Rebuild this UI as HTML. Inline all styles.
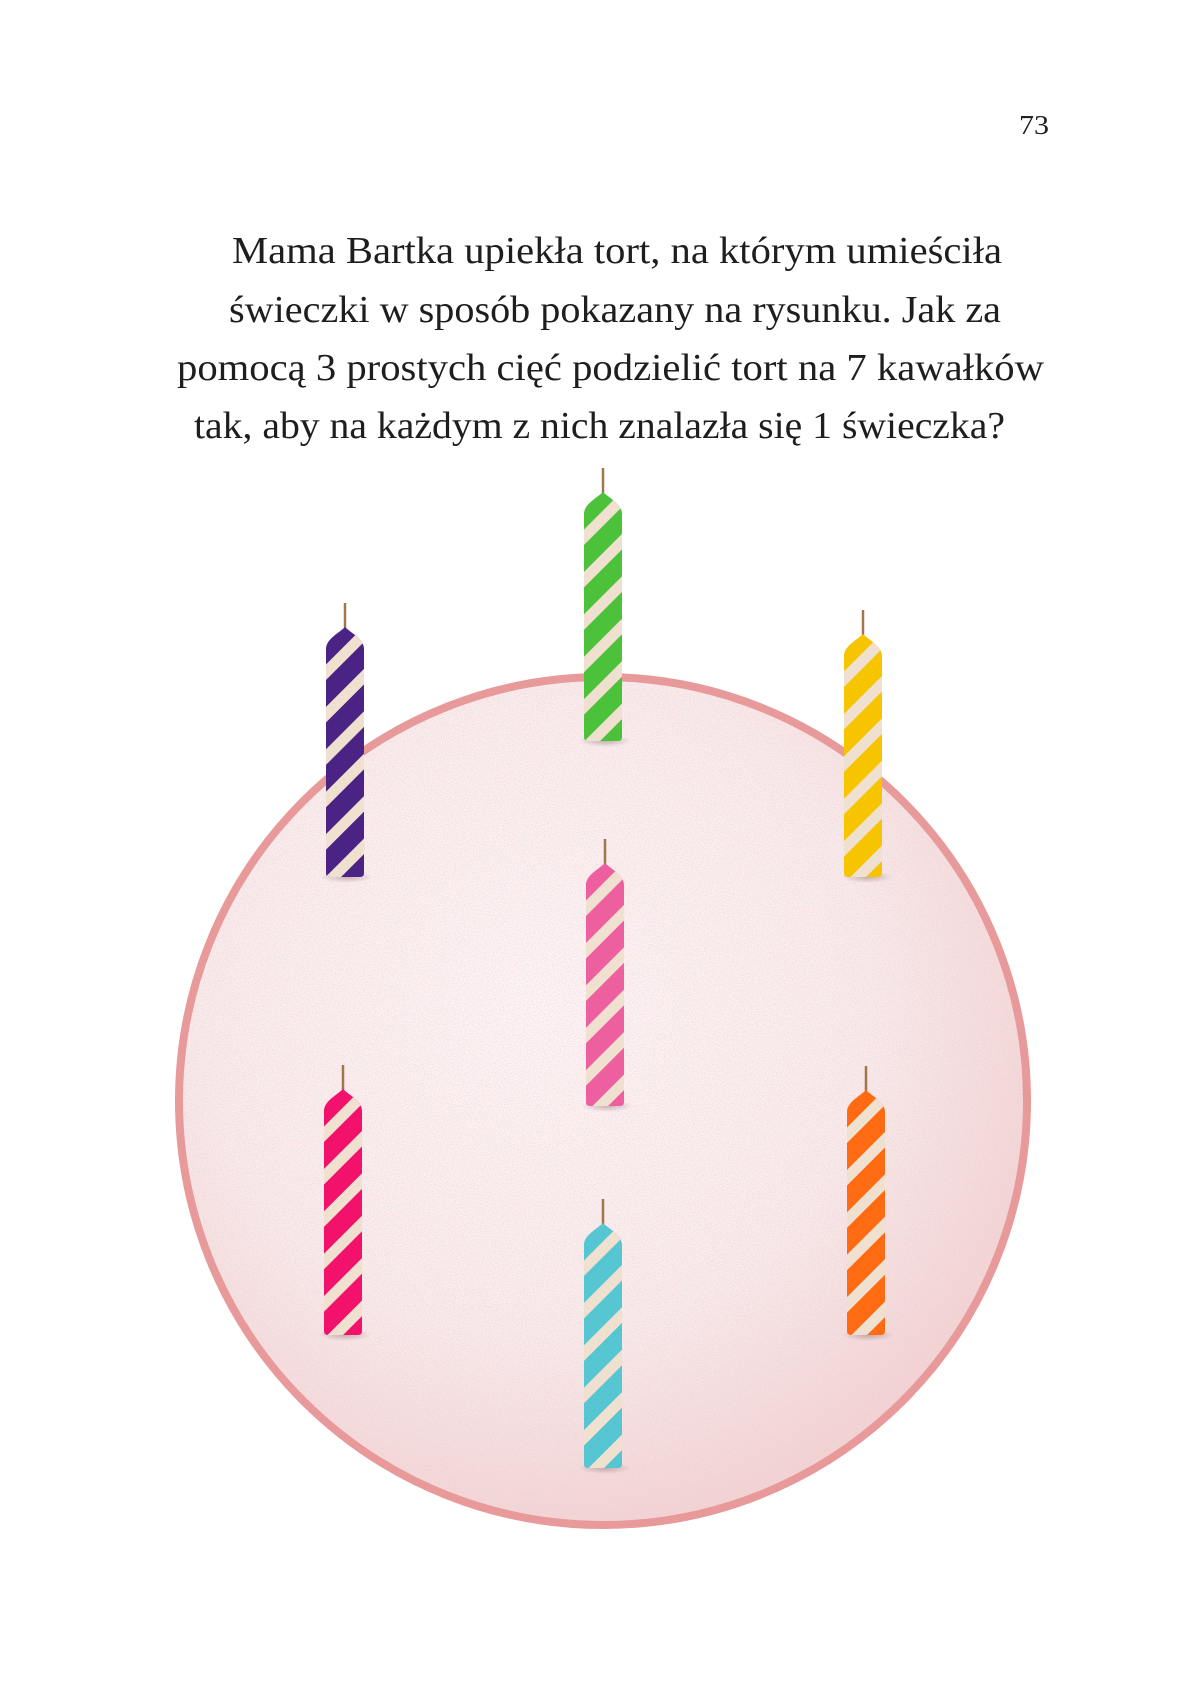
<!DOCTYPE html>
<html><head><meta charset="utf-8"><style>
html,body{margin:0;padding:0;background:#fff;}
svg{display:block}
</style></head><body>
<svg width="1202" height="1708" viewBox="0 0 1202 1708" xmlns="http://www.w3.org/2000/svg">
<defs>
<radialGradient id="cake" cx="0.42" cy="0.38" r="0.66">
<stop offset="0" stop-color="#fcf7f7"/>
<stop offset="0.6" stop-color="#f8eded"/>
<stop offset="1" stop-color="#f1d2d2"/>
</radialGradient>
<filter id="noise" x="0" y="0" width="100%" height="100%">
<feTurbulence type="fractalNoise" baseFrequency="0.9" numOctaves="2" seed="3"/>
<feColorMatrix type="matrix" values="0 0 0 0 0.88  0 0 0 0 0.55  0 0 0 0 0.6  0 0 0 -2.4 1.35"/>
<feComposite in2="SourceGraphic" operator="in"/>
</filter>
<pattern id="stripe" patternUnits="userSpaceOnUse" width="60" height="30" patternTransform="rotate(-45)">
<rect x="0" y="0" width="60" height="11" fill="#efe0cf"/>
</pattern>
<radialGradient id="shadow">
<stop offset="0" stop-color="#8a6a6a" stop-opacity="0.45"/>
<stop offset="1" stop-color="#8a6a6a" stop-opacity="0"/>
</radialGradient>
</defs>

<text x="1019" y="134" font-family="Liberation Serif, serif" font-size="27" fill="#222" textLength="30" lengthAdjust="spacingAndGlyphs">73</text>

<g font-family="Liberation Serif, serif" font-size="38" fill="#1e1e1e">
<text x="232" y="263" textLength="770" lengthAdjust="spacingAndGlyphs">Mama Bartka upiekła tort, na którym umieściła</text>
<text x="229" y="322" textLength="772" lengthAdjust="spacingAndGlyphs">świeczki w sposób pokazany na rysunku. Jak za</text>
<text x="177" y="380" textLength="867" lengthAdjust="spacingAndGlyphs">pomocą 3 prostych cięć podzielić tort na 7 kawałków</text>
<text x="194" y="438" textLength="811" lengthAdjust="spacingAndGlyphs">tak, aby na każdym z nich znalazła się 1 świeczka?</text>
</g>

<circle cx="603" cy="1101" r="423" fill="url(#cake)"/>
<circle cx="603" cy="1101" r="423" fill="#fff" filter="url(#noise)" opacity="0.7"/>
<circle cx="603" cy="1101" r="424" fill="none" stroke="#e8999a" stroke-width="8"/>

<g>
<g transform="translate(345,603)">
<ellipse cx="2" cy="274" rx="26" ry="6" fill="url(#shadow)"/>
<line x1="0" y1="0" x2="0" y2="25" stroke="#a0764a" stroke-width="2.5"/>
<path d="M0,24 C6,30 19,36 19,46 L19,270 Q19,274 15,274 L-15,274 Q-19,274 -19,270 L-19,46 C-19,36 -6,30 0,24Z" fill="#4b2384"/>
<path d="M0,24 C6,30 19,36 19,46 L19,270 Q19,274 15,274 L-15,274 Q-19,274 -19,270 L-19,46 C-19,36 -6,30 0,24Z" fill="url(#stripe)"/>
</g>
<g transform="translate(603,468)">
<ellipse cx="2" cy="273" rx="26" ry="6" fill="url(#shadow)"/>
<line x1="0" y1="0" x2="0" y2="25" stroke="#a0764a" stroke-width="2.5"/>
<path d="M0,24 C6,30 19,36 19,46 L19,269 Q19,273 15,273 L-15,273 Q-19,273 -19,269 L-19,46 C-19,36 -6,30 0,24Z" fill="#4cc23a"/>
<path d="M0,24 C6,30 19,36 19,46 L19,269 Q19,273 15,273 L-15,273 Q-19,273 -19,269 L-19,46 C-19,36 -6,30 0,24Z" fill="url(#stripe)"/>
</g>
<g transform="translate(863,610)">
<ellipse cx="4" cy="267" rx="26" ry="6" fill="url(#shadow)"/>
<line x1="0" y1="0" x2="0" y2="25" stroke="#a0764a" stroke-width="2.5"/>
<path d="M0,24 C6,30 19,36 19,46 L19,263 Q19,267 15,267 L-15,267 Q-19,267 -19,263 L-19,46 C-19,36 -6,30 0,24Z" fill="#f7c400"/>
<path d="M0,24 C6,30 19,36 19,46 L19,263 Q19,267 15,267 L-15,267 Q-19,267 -19,263 L-19,46 C-19,36 -6,30 0,24Z" fill="url(#stripe)"/>
</g>
<g transform="translate(605,839)">
<ellipse cx="2" cy="267" rx="26" ry="6" fill="url(#shadow)"/>
<line x1="0" y1="0" x2="0" y2="25" stroke="#a0764a" stroke-width="2.5"/>
<path d="M0,24 C6,30 19,36 19,46 L19,263 Q19,267 15,267 L-15,267 Q-19,267 -19,263 L-19,46 C-19,36 -6,30 0,24Z" fill="#ee5fa0"/>
<path d="M0,24 C6,30 19,36 19,46 L19,263 Q19,267 15,267 L-15,267 Q-19,267 -19,263 L-19,46 C-19,36 -6,30 0,24Z" fill="url(#stripe)"/>
</g>
<g transform="translate(343,1065)">
<ellipse cx="2" cy="270" rx="26" ry="6" fill="url(#shadow)"/>
<line x1="0" y1="0" x2="0" y2="25" stroke="#a0764a" stroke-width="2.5"/>
<path d="M0,24 C6,30 19,36 19,46 L19,266 Q19,270 15,270 L-15,270 Q-19,270 -19,266 L-19,46 C-19,36 -6,30 0,24Z" fill="#f2126c"/>
<path d="M0,24 C6,30 19,36 19,46 L19,266 Q19,270 15,270 L-15,270 Q-19,270 -19,266 L-19,46 C-19,36 -6,30 0,24Z" fill="url(#stripe)"/>
</g>
<g transform="translate(866,1066)">
<ellipse cx="2" cy="269" rx="26" ry="6" fill="url(#shadow)"/>
<line x1="0" y1="0" x2="0" y2="25" stroke="#a0764a" stroke-width="2.5"/>
<path d="M0,24 C6,30 19,36 19,46 L19,265 Q19,269 15,269 L-15,269 Q-19,269 -19,265 L-19,46 C-19,36 -6,30 0,24Z" fill="#ff6b12"/>
<path d="M0,24 C6,30 19,36 19,46 L19,265 Q19,269 15,269 L-15,269 Q-19,269 -19,265 L-19,46 C-19,36 -6,30 0,24Z" fill="url(#stripe)"/>
</g>
<g transform="translate(603,1199)">
<ellipse cx="2" cy="269" rx="26" ry="6" fill="url(#shadow)"/>
<line x1="0" y1="0" x2="0" y2="25" stroke="#a0764a" stroke-width="2.5"/>
<path d="M0,24 C6,30 19,36 19,46 L19,265 Q19,269 15,269 L-15,269 Q-19,269 -19,265 L-19,46 C-19,36 -6,30 0,24Z" fill="#55c6d2"/>
<path d="M0,24 C6,30 19,36 19,46 L19,265 Q19,269 15,269 L-15,269 Q-19,269 -19,265 L-19,46 C-19,36 -6,30 0,24Z" fill="url(#stripe)"/>
</g>
</g>
</svg>
</body></html>
